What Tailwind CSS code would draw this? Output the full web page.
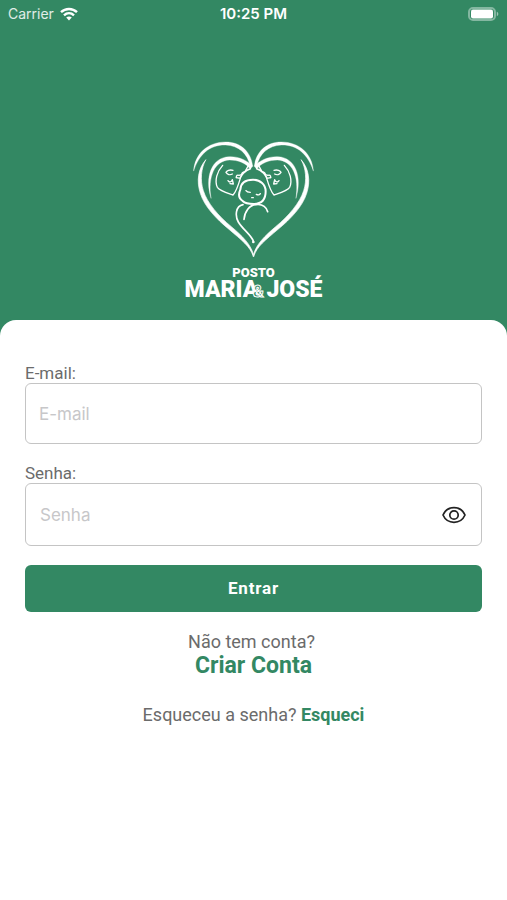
<!DOCTYPE html>
<html lang="pt-BR">
<head>
    <meta charset="UTF-8">
    <meta name="viewport" content="width=device-width, initial-scale=1.0">
    <title>Posto Maria &amp; José - Entrar</title>
    <script src="https://cdn.jsdelivr.net/npm/@tailwindcss/browser@4"></script>
</head>
<body class="min-h-screen flex flex-col bg-[#338863] font-['Roboto',sans-serif] text-[#6b6b6b]">
    <!-- Status bar -->
    <div class="grid grid-cols-3 items-center h-7 px-2 text-white font-['Inter',sans-serif] text-sm">
        <div class="flex items-center gap-[6px] text-white/85">
            <span>Carrier</span>
            <svg class="w-[18px] h-[14px]" viewBox="0 0 18 14" fill="none" stroke="white" stroke-width="2.4">
                <path d="M1 5.2C5.5 .9 12.5 .9 17 5.2"/>
                <path d="M4 8.3C6.9 5.6 11.1 5.6 14 8.3"/>
                <path d="M9 13.5L6.2 10.6C7.7 9.2 10.3 9.2 11.8 10.6Z" fill="white" stroke="none"/>
            </svg>
        </div>
        <span class="text-center text-[15px] font-semibold">10:25 PM</span>
        <svg class="justify-self-end w-[31px] h-[14px]" viewBox="0 0 31 14">
            <rect x="1" y="1" width="26" height="12" rx="4" fill="none" stroke="white" stroke-opacity=".4" stroke-width="2"/>
            <rect x="3" y="2.5" width="22" height="9" rx="2" fill="white"/>
            <path d="M28.8 4.8C30.8 5.5 30.8 8.5 28.8 9.2Z" fill="white" fill-opacity=".5"/>
        </svg>
    </div>

    <!-- Logo -->
    <header class="flex flex-col items-center pt-28 pb-5 text-white font-black">
        <svg class="w-[147px] h-[120px]" viewBox="0 30 441 360" fill="none" stroke="white" stroke-linecap="round" stroke-linejoin="round" role="img" aria-label="Maria, José e o menino">
            <defs>
                <g id="half">
                    <!-- Hair, veil and heart outline -->
                    <path fill="white" stroke-width="1" d="M41 122C44 72 83 36 137 36C184 36 213 67 218 108L211 110C203 70 176 47 137 45C88 44 57 74 41 122Z"/>
                    <path fill="white" stroke-width="1" d="M93 204C74 143 93 82 148 80C177 79 203 92 218 109L211 117C197 99 174 90 149 90C103 92 83 140 93 204Z"/>
                    <path fill="white" stroke-width="2" d="M77 90C63 115 60 151 70 182C81 218 116 259 154 290C187 318 211 342 220 372L220 380C211 349 183 329 147 298C108 266 73 229 61 190C49 153 54 116 77 90Z"/>
                    <!-- Face -->
                    <path stroke-width="4" d="M128 106C111 124 103 153 112 172C120 183 142 189 159 195C169 185 175 165 181 145L169 143"/>
                    <path stroke-width="4" d="M159 121C149 118 140 122 138 127C142 134 150 136 157 132"/>
                    <path stroke-width="4" d="M144 152C148 158 154 157 157 149L160 162L150 161M169 143C168 136 173 134 177 136L185 134C185 128 190 126 195 125L205 107"/>
                    <path stroke-width="5" d="M181 143C186 131 197 121 211 116"/>
                </g>
            </defs>
            <use href="#half"/>
            <use href="#half" transform="translate(441 0) scale(-1 1)"/>
            <!-- Baby -->
            <path stroke-width="6" d="M188 213C176 205 175 192 181 179C182 159 197 149 219 149C241 149 257 164 257 184C257 211 242 222 221 222C206 222 195 220 188 213"/>
            <path stroke-width="4" d="M198 182C201 187 207 187 211 187M229 193C234 196 239 195 241 191M215 203L220 203"/>
            <path stroke-width="5" d="M189 224C166 229 165 258 175 276C187 297 212 313 220 333M192 268C194 245 208 225 228 224C244 222 258 229 263 245"/>
            <circle cx="220" cy="336" r="4" fill="white" stroke="none"/>
        </svg>
        <h1 class="flex flex-col items-center">
            <span class="text-[13px] leading-[14px] mt-[6px]">POSTO</span>
            <span class="relative flex gap-2 text-[23px] leading-5">
                <span>MARIA</span>
                <span class="absolute inset-x-0 top-[2px] pl-[10px] text-center text-base leading-5 text-[#338863] [-webkit-text-stroke:1px_white]">&amp;</span>
                <span>JOSÉ</span>
            </span>
        </h1>
    </header>

    <!-- Login form -->
    <main class="grow rounded-t-2xl bg-white px-[25px] pt-[43px]">
        <form>
            <label for="email" class="block text-[17px] leading-5">E-mail:</label>
            <input id="email" type="email" placeholder="E-mail" class="block w-full h-[61px] rounded-md border border-[#c4c4c4] px-[13px] font-['Inter',sans-serif] text-[17px] placeholder:text-[#c7c7c9]">

            <label for="senha" class="block mt-[19px] text-[17px] leading-5">Senha:</label>
            <div class="flex items-center h-[63px] rounded-md border border-[#c4c4c4] pl-[14px] pr-[15px]">
                <input id="senha" type="password" placeholder="Senha" class="grow min-w-0 h-full font-['Inter',sans-serif] text-[17px] placeholder:text-[#c7c7c9]">
                <button type="button" aria-label="Mostrar senha">
                    <svg class="w-6 h-[18px]" viewBox="0 0 24 18" fill="none" stroke="#222" stroke-width="1.7">
                        <path d="M1 9C3 4.500 7.500 1.700 12 1.700S21 4.500 23 9C21 13.500 16.500 16.300 12 16.300S3 13.500 1 9Z"/>
                        <circle cx="12" cy="9" r="4.200"/>
                    </svg>
                </button>
            </div>

            <button type="submit" class="block w-full h-[47px] mt-[19px] rounded-md bg-[#338863] text-white text-[17px] font-bold tracking-wider">Entrar</button>
        </form>

        <div class="mt-[18px] text-center text-lg leading-6">
            <p class="pr-1">Não tem conta?</p>
            <a href="#" class="text-[23px] font-bold text-[#338863]">Criar Conta</a>
            <p class="mt-6">Esqueceu a senha? <a href="#" class="font-bold text-[#338863]">Esqueci</a></p>
        </div>
    </main>
</body>
</html>
